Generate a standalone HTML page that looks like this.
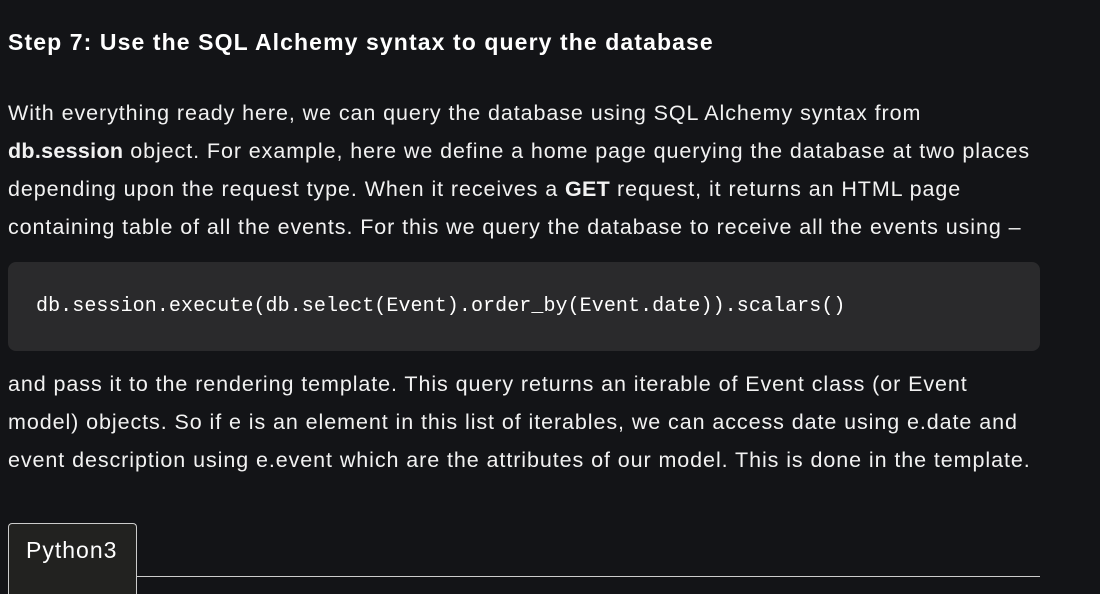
<!DOCTYPE html>
<html><head><style>
body{margin:0;background:#131417;width:1100px;height:582px;overflow:hidden;font-family:"Liberation Sans",sans-serif;color:#fff}
h2{position:absolute;left:8px;top:29px;margin:0;font-size:23px;letter-spacing:1.1px;font-weight:bold;white-space:nowrap}
.p{position:absolute;left:8px;font-size:21.5px;letter-spacing:0.92px;line-height:38px;white-space:nowrap;color:#f2f2f2}
.p b{letter-spacing:0.3px}
.code{position:absolute;left:8px;top:262px;width:1032px;height:89px;background:#2a2a2c;border-radius:8px}
.code span{position:absolute;left:28px;top:33px;font-family:"Liberation Mono",monospace;font-size:20px;letter-spacing:0.08px;line-height:24px;color:#fff}
.tab{position:absolute;left:8px;top:523px;width:127px;height:70px;background:#222220;border:1px solid #ccc;border-bottom:none;border-radius:4px 4px 0 0}
.tab span{position:absolute;left:17px;top:13px;font-size:23px;letter-spacing:1px}
.line{position:absolute;left:136px;top:576px;width:904px;height:1px;background:#ccc}
</style></head><body>
<h2>Step 7: Use the SQL Alchemy syntax to query the database</h2>
<div class="p" style="top:94px">With everything ready here, we can query the database using SQL Alchemy syntax from<br><b>db.session</b> object. For example, here we define a home page querying the database at two places<br>depending upon the request type. When it receives a <b>GET</b> request, it returns an HTML page<br>containing table of all the events. For this we query the database to receive all the events using –</div>
<div class="code"><span>db.session.execute(db.select(Event).order_by(Event.date)).scalars()</span></div>
<div class="p" style="top:365px">and pass it to the rendering template. This query returns an iterable of Event class (or Event<br>model) objects. So if e is an element in this list of iterables, we can access date using e.date and<br>event description using e.event which are the attributes of our model. This is done in the template.</div>
<div class="tab"><span>Python3</span></div>
<div class="line"></div>
</body></html>
